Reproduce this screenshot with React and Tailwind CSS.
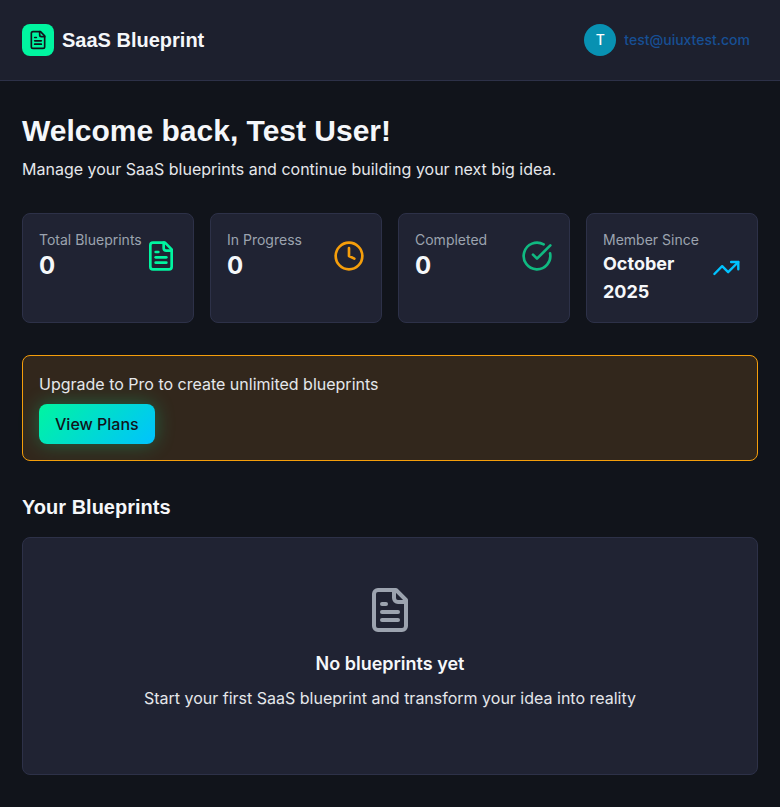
import { Clock, CircleCheckBig, TrendingUp } from "lucide-react";

function FileText({ className }) {
  return (
    <svg className={className} viewBox="0 0 24 24" fill="none" stroke="currentColor" strokeWidth="2" strokeLinecap="round" strokeLinejoin="round">
      <path d="M15 2H6a2 2 0 0 0-2 2v16a2 2 0 0 0 2 2h12a2 2 0 0 0 2-2V7Z" />
      <path d="M14 2v4a2 2 0 0 0 2 2h4" />
      <path d="M10 9H8" />
      <path d="M16 13H8" />
      <path d="M16 17H8" />
    </svg>
  );
}

const stats = [
  { label: "Total Blueprints", value: "0", Icon: FileText, color: "text-[#00f5a0]" },
  { label: "In Progress", value: "0", Icon: Clock, color: "text-[#f59e0b]" },
  { label: "Completed", value: "0", Icon: CircleCheckBig, color: "text-[#10b981]" },
  { label: "Member Since", value: "October 2025", Icon: TrendingUp, color: "text-[#00c2ff]", small: true },
];

const heading = "font-['Liberation_Sans',sans-serif] font-bold text-[#f5f7fa]";

function StatCard({ label, value, Icon, color, small }) {
  return (
    <div className="rounded-lg border border-[#2d3148] bg-[#202333] p-4">
      <div className="flex items-center justify-between">
        <div>
          <p className="text-sm text-[#9ca3af]">{label}</p>
          <p className={small ? "text-lg font-bold text-[#f5f7fa]" : "text-2xl font-bold text-[#f5f7fa]"}>{value}</p>
        </div>
        <Icon className={`h-8 w-8 ${color}`} />
      </div>
    </div>
  );
}

export default function App() {
  return (
    <div className="min-h-screen bg-[#11141b] font-['Inter',sans-serif] text-[#e5e7eb]">
      <header className="border-b border-[#2d3148] bg-[#1d202e] px-[22px] py-6">
        <div className="flex items-center justify-between">
          <div className="flex items-center gap-2">
            <div className="flex h-8 w-8 items-center justify-center rounded-lg bg-[#00f5a0]">
              <FileText className="h-5 w-5 text-[#11141b]" />
            </div>
            <span className={`text-xl ${heading}`}>SaaS Blueprint</span>
          </div>
          <div className="flex items-center gap-2 pr-2">
            <div className="flex h-8 w-8 items-center justify-center rounded-full bg-[#0891b2] text-sm font-medium text-white">T</div>
            <span className="text-sm font-medium text-[#174f94]">test@uiuxtest.com</span>
          </div>
        </div>
      </header>

      <main className="px-[22px] py-8">
        <h1 className={`mb-2 text-3xl ${heading}`}>Welcome back, Test User!</h1>
        <p className="mb-8">Manage your SaaS blueprints and continue building your next big idea.</p>

        <section className="mb-8 grid grid-cols-4 gap-4">
          {stats.map((s) => (
            <StatCard key={s.label} {...s} />
          ))}
        </section>

        <section className="mb-8 rounded-lg border border-[#f59e0b] bg-[#32271c] p-4">
          <p className="mb-2">Upgrade to Pro to create unlimited blueprints</p>
          <button className="block h-10 rounded-lg bg-[linear-gradient(135deg,#00f5a0_0%,#00c2ff_100%)] px-4 font-medium text-[#11141b] shadow-[0_0_20px_rgba(0,245,160,0.3)]">
            View Plans
          </button>
        </section>

        <h2 className={`mb-4 text-xl ${heading}`}>Your Blueprints</h2>
        <section className="rounded-lg border border-[#2d3148] bg-[#202333] p-12 text-center">
          <FileText className="mx-auto mb-4 h-12 w-12 text-[#9ca3af]" />
          <h3 className="mb-2 text-lg font-semibold text-[#f5f7fa]">No blueprints yet</h3>
          <p className="mb-4">Start your first SaaS blueprint and transform your idea into reality</p>
        </section>
      </main>
    </div>
  );
}
